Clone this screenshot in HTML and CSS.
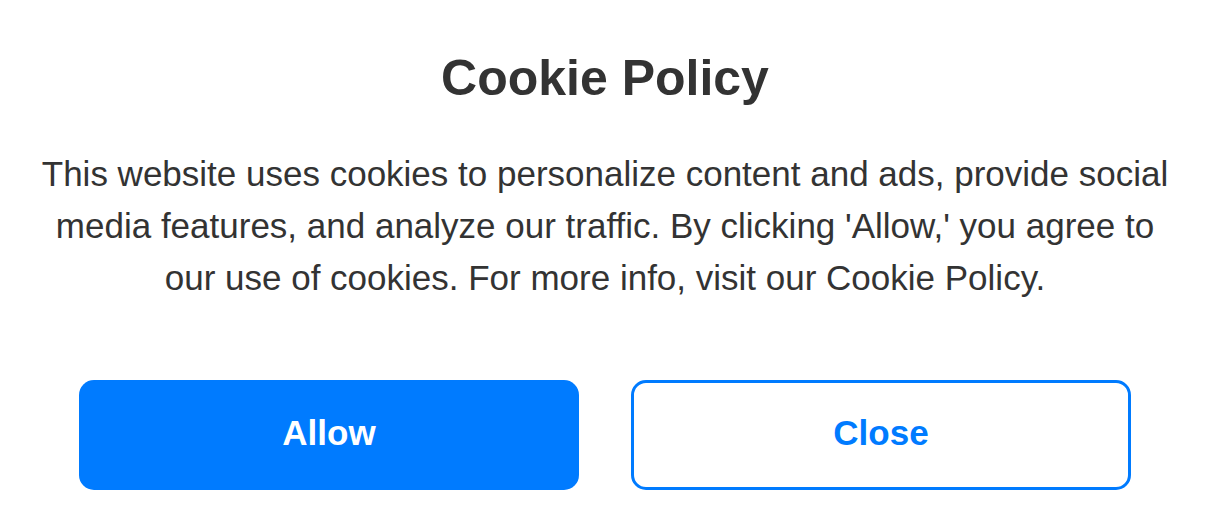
FILE: index.html
```html
<!DOCTYPE html>
<html lang="en">
<head>
  <meta charset="UTF-8" />
  <meta name="viewport" content="width=device-width, initial-scale=1.0" />
  <title>Cookie Policy</title>
  <link rel="stylesheet" href="styles.css">
</head>
<body>
  <div class="dialog">
    <h1>Cookie Policy</h1>
    <p class="message">This website uses cookies to personalize content and ads, provide social media features, and analyze our traffic. By clicking 'Allow,' you agree to our use of cookies. For more info, visit our Cookie Policy.</p>
    <div class="actions">
      <button class="btn btn-allow">Allow</button>
      <button class="btn btn-close">Close</button>
    </div>
  </div>
</body>
</html>
```

FILE: styles.css
```css
body {
  margin: 0;
  font-family: "Liberation Sans", Arial, sans-serif;
  background: #fff;
  color: #333;
}
.dialog {
  padding: 50px 32px 0 36px;
  text-align: center;
}
h1 {
  margin: 0 0 42px;
  font-size: 50px;
  font-weight: bold;
  line-height: 56px;
  color: #333;
}
.message {
  margin: 0 0 76px;
  font-size: 35px;
  line-height: 52px;
  color: #333;
}
.actions {
  display: flex;
  justify-content: center;
  gap: 52px;
}
.btn {
  box-sizing: border-box;
  width: 500px;
  height: 110px;
  padding: 0 0 4px;
  font-family: inherit;
  font-size: 35px;
  font-weight: bold;
  border-radius: 15px;
  cursor: pointer;
}
.btn-allow {
  background: #007bff;
  border: none;
  color: #fff;
}
.btn-close {
  background: #fff;
  border: 3px solid #007bff;
  color: #007bff;
}
```
